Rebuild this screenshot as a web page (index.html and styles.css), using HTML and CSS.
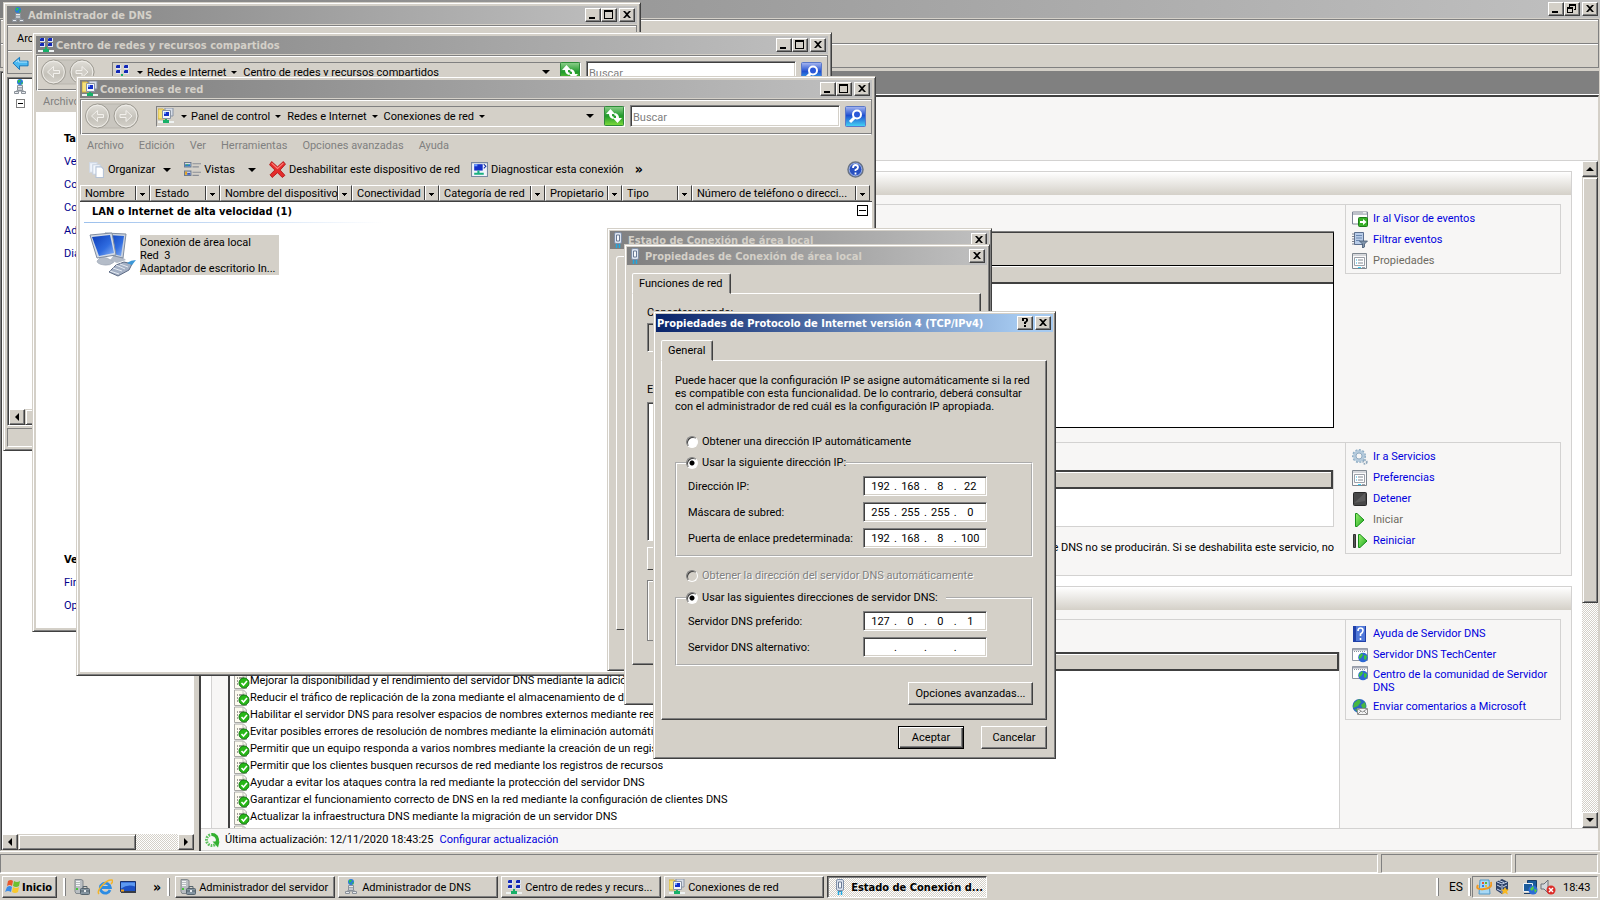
FILE: index.html
```html
<!DOCTYPE html>
<html lang="es">
<head>
<meta charset="utf-8">
<title>Administrador del servidor</title>
<link rel="stylesheet" href="styles.css">
</head>
<body>
<svg class="defs" aria-hidden="true">
  <defs>
    <linearGradient id="gBlue" x1="0" y1="0" x2="0" y2="1"><stop offset="0" stop-color="#a9b8f0"/><stop offset=".45" stop-color="#1f4fd0"/><stop offset="1" stop-color="#45d6f5"/></linearGradient>
    <linearGradient id="gGreen" x1="0" y1="0" x2="0" y2="1"><stop offset="0" stop-color="#8fd08c"/><stop offset=".5" stop-color="#1f9a2a"/><stop offset="1" stop-color="#7fdc3c"/></linearGradient>
    <linearGradient id="gScreen" x1="0" y1="0" x2="1" y2="1"><stop offset="0" stop-color="#0c3cb8"/><stop offset=".6" stop-color="#2f6ce0"/><stop offset="1" stop-color="#8cb4f4"/></linearGradient>
    <linearGradient id="gGrey" x1="0" y1="0" x2="0" y2="1"><stop offset="0" stop-color="#e2e0da"/><stop offset=".6" stop-color="#c4c1b9"/><stop offset="1" stop-color="#d6d3cc"/></linearGradient>
    <linearGradient id="gPlay" x1="0" y1="0" x2="1" y2="1"><stop offset="0" stop-color="#9af070"/><stop offset="1" stop-color="#1ea81e"/></linearGradient>
  </defs>
  <symbol id="i-dns" viewBox="0 0 16 16"><circle cx="8" cy="3" r="3" fill="#2a7bd8"/><path d="M6 1l3 0-1 2-2 1zM9 4l2-1-1 3z" fill="#2fc04a"/><path d="M8 7v5M4 12h8" stroke="#8a9098"/><path d="M5.500 6.500h5v5h-5zM2.500 12.500h4v2h-4zM9.500 12.500h4v2h-4z" fill="#e8ebef" stroke="#8a9199"/><path d="M6 8.500h4M6 10h4" stroke="#8d959e" stroke-width=".8"/></symbol>
  <symbol id="i-center" viewBox="0 0 16 16"><path d="M2 1h5v4H2zM10 1h5v4h-5zM2 6h5v4H2zM10 6h5v4h-5z" fill="#dfe6f4"/><path d="M2 1h4v3H2zM10 1h4v3h-4zM2 6h4v3H2zM10 6h4v3h-4z" fill="#1428b4"/><path d="M2 1h1v1H2zM10 1h1v1h-1zM2 6h1v1H2zM10 6h1v1h-1z" fill="#5878f0"/><path d="M0 14h16" stroke="#eef2f2" stroke-width="2"/><path d="M7 10h2v2h2v3H5v-3h2z" fill="#18b068"/></symbol>
  <symbol id="i-conn" viewBox="0 0 16 16"><path d="M0 1h5l1 1h3v9H0z" fill="#f6e27a" stroke="#d0b040"/><path d="M7 0h8v8H7z" fill="#d8dee8" stroke="#8a94a4"/><path d="M4.500 2.500h8v8h-8z" fill="#f4f6fa" stroke="#8a94a4"/><path d="M6 4h5v4H6z" fill="#1430c8"/><path d="M6 4h2v2H6z" fill="#6c9cff"/><path d="M0 14h16" stroke="#eef2f2" stroke-width="2"/><path d="M7 11h2v1h2v3H5v-3h2z" fill="#18b068"/></symbol>
  <symbol id="i-plug" viewBox="0 0 16 16"><rect x="4.500" y=".5" width="7" height="11" rx="1.500" fill="#dce4f0" stroke="#8090a8"/><path d="M6.500 3v6h3V3z" fill="#f6f9fc" stroke="#6a7a94"/><path d="M6 12h4v1H6z" fill="#6c7c94"/><path d="M6.500 12v4M9.500 12v4" stroke="#20a8e0" stroke-width="1.500"/></symbol>
  <symbol id="i-server" viewBox="0 0 16 16"><path d="M1 .5h6l2 1v10l-3 3H2l-1-2z" fill="#b9bec2" stroke="#83898d"/><path d="M2 2.500h4M2 4.500h4M2 6.500h4" stroke="#f4f6f6"/><path d="M2 9h2v2H2z" fill="#46c83c"/><rect x="6.500" y="9.500" width="9" height="6" rx="1" fill="#8494a0" stroke="#56646e"/><path d="M9 9V7.500h4V9M7 12h8" fill="none" stroke="#56646e"/><path d="M10 11h2v2h-2z" fill="#e8ecef"/></symbol>
  <symbol id="i-nav" viewBox="0 0 54 26"><rect x="1" y="1" width="52" height="24" rx="12" fill="#c9c6bf" stroke="#b8b5ad"/><g stroke="#a09d95"><circle cx="12.500" cy="13" r="12" fill="url(#gGrey)"/><circle cx="41" cy="13" r="12" fill="url(#gGrey)"/></g><g fill="none" stroke="#efede8"><circle cx="12.500" cy="13" r="10.800"/><circle cx="41" cy="13" r="10.800"/></g><g fill="#d0cdc6" stroke="#f2f0ec"><path d="M18.500 11.500h-6v-4L6.500 13l6 5.500v-4h6z"/><path d="M35 11.500h6v-4l6 5.500-6 5.500v-4h-6z"/></g></symbol>
  <symbol id="i-refresh" viewBox="0 0 20 20"><rect x=".5" y=".5" width="19" height="19" rx="1" fill="url(#gGreen)" stroke="#2e8a38"/><path d="M2 8l4.500-5L11 8H8v2l2 1-1 2q-4-1-4-5zM18 12l-4.500 5L9 12h3v-2l-2-1 1-2q4 1 4 5z" fill="#fff"/></symbol>
  <symbol id="i-search" viewBox="0 0 21 21"><rect x=".5" y=".5" width="20" height="20" rx="1" fill="url(#gBlue)" stroke="#5a78c8"/><path d="M9.500 11.500L5 16" stroke="#fff" stroke-width="3"/><circle cx="12" cy="8.500" r="4" fill="#2a58d8" stroke="#fff" stroke-width="2"/></symbol>
  <symbol id="i-help" viewBox="0 0 17 17"><circle cx="8.500" cy="8.500" r="7.500" fill="#2850c0" stroke="#6a7484" stroke-width="1.500"/><circle cx="8.500" cy="8.500" r="6.300" fill="none" stroke="#b8c8f0" stroke-width=".8"/><path d="M6 7q0-3 2.500-3T11 6.500Q11 8 8.500 9v1M8.500 11.500v2" fill="none" stroke="#fff" stroke-width="1.800"/></symbol>
  <symbol id="i-org" viewBox="0 0 16 16"><path d="M1.500 1.500h7v9h-7z" fill="#eef3fb" stroke="#d0d8e4"/><path d="M4.500 3.500h7v9h-7z" fill="#f4f8fd" stroke="#c6d0de"/><path d="M7.500 5.500h5l2 2v8h-7z" fill="#fff" stroke="#b4c2d6"/></symbol>
  <symbol id="i-views" viewBox="0 0 16 16"><path d="M.5 1.500h6v4h-6zM.5 9.500h6v4h-6z" fill="#fff" stroke="#6a7a90"/><path d="M1 3h5v2H1z" fill="#2a78c8"/><path d="M2 3h2v1H2z" fill="#50b850"/><path d="M1 10h2v3H1z" fill="#e0a020"/><path d="M3 11h3v2H3z" fill="#3858c0"/><path d="M8 2.500h8M8 5.500h6M8 10.500h8M8 13.500h6" stroke="#8a8e96"/></symbol>
  <symbol id="i-x" viewBox="0 0 16 16"><path d="M2.500.5L8 5.500l5.500-5 2 2.500-5 5.500 4.500 5-2.500 2L8 11l-5 4.500-2-2.500 4.500-4.500L.5 3.500z" fill="#e42c2c" stroke="#b01818" stroke-width=".8"/><path d="M2.500 2L8 7l5.500-5" fill="none" stroke="#ff8078"/></symbol>
  <symbol id="i-diag" viewBox="0 0 16 14"><path d="M.5.5h15v13H.5z" fill="#f0f4fa" stroke="#7888a0"/><path d="M3 2h8v6H3z" fill="#1430c8"/><path d="M3 2h3v2H3z" fill="#6c9cff"/><path d="M6 8h2v3H6zM3 10h9v2H3z" fill="#18b080"/><path d="M12 2l2 2-2 2" stroke="#1430a0" fill="none"/></symbol>
  <symbol id="i-pc" viewBox="0 0 48 46"><path d="M25 24l7 1 5 4-9 3-7-3z" fill="#b4bcc8"/><path d="M16 2l21 1-3 24-17-4z" fill="#c9d2de" stroke="#7f8ca0"/><path d="M18 4l17 1-3 20-14-4z" fill="url(#gScreen)"/><path d="M12 26l6 1 7 4q-4 4-10 3-7-1-7-4z" fill="#b4bcc8" stroke="#98a2b2" stroke-width=".6"/><path d="M1 4l22-2 4 22-19 3z" fill="#d4dbe5" stroke="#7f8ca0"/><path d="M3 6l18-2 4 18-15 3z" fill="url(#gScreen)"/><path d="M27 34l8-3 8 2-3 6-11 6-9-4z" fill="#a4b0c4" stroke="#5c6a84"/><path d="M24 37l9 3M27 34l9 4M31 33l8 3M21 40l9 3" stroke="#e4eaf2"/><path d="M38 32q4-3 9-3l-4 5z" fill="#3c98d8"/></symbol>
  <symbol id="i-left" viewBox="0 0 18 14"><path d="M1 7l7-6v4h9v5H8v4z" fill="#4ab8f0" stroke="#1474b8"/><path d="M4 6l3-2v2h9" fill="none" stroke="#b8e4fc"/></symbol>
  <symbol id="i-doc" viewBox="0 0 16 17"><path d="M.5 1h9l3 3v12.500H.5z" fill="#fdfbf0" stroke="#a8a8a4"/><path d="M9 1v4h4" fill="none" stroke="#c0c0bc"/><path d="M3 6h1M3 9h1M3 12h1M5 6h5" stroke="#404040"/><circle cx="10" cy="11" r="5" fill="#28b818" stroke="#117a10"/><path d="M7.500 11l2 2 3.500-4" fill="none" stroke="#fff" stroke-width="1.600"/></symbol>
  <symbol id="i-viewer" viewBox="0 0 16 16"><path d="M.5 1h15v12H.5z" fill="#fff" stroke="#7c8494"/><path d="M1 3h14" stroke="#7c8494"/><path d="M11 1.800h3" stroke="#fff"/><rect x="6.500" y="6.500" width="9" height="9" rx="1" fill="#38b028" stroke="#1c7c18"/><path d="M8 10h3V8l3.500 3L11 14v-2H8z" fill="#fff"/></symbol>
  <symbol id="i-filter" viewBox="0 0 16 16"><path d="M2.500.5h9v12h-9z" fill="#b8cce8" stroke="#5c7090"/><path d="M4 3.500h6M4 6h6M4 8.500h4" stroke="#6c88b0"/><path d="M0 2h3M0 4.500h3M0 7h3M0 9.500h3M0 12h3" stroke="#606878" stroke-width=".8"/><path d="M7.500 9h8l-3 3v3l-2 1v-4z" fill="#8094ac" stroke="#445870" stroke-width=".8"/></symbol>
  <symbol id="i-props" viewBox="0 0 16 16"><path d="M.5.500h14v15H.5z" fill="#fafafa" stroke="#808890"/><path d="M1 2h13" stroke="#b0b4bc"/><path d="M2.500 4.500h10v8h-10z" fill="#fff" stroke="#9ca0a8"/><path d="M6 7h5M6 10h5" stroke="#808890"/><path d="M4 7h1M4 10h1" stroke="#20b0e0"/><path d="M6 14.500h3" stroke="#38d0f8"/><path d="M10 14.500h3" stroke="#a0a4ac"/></symbol>
  <symbol id="i-gear" viewBox="0 0 16 16"><circle cx="7" cy="7" r="4.500" fill="none" stroke="#b4cadc" stroke-width="3"/><circle cx="7" cy="7" r="6.300" fill="none" stroke="#8cacc4" stroke-width="1.400" stroke-dasharray="2 1.600"/><circle cx="7" cy="7" r="3" fill="#f7f6f5" stroke="#7c9cb8" stroke-width=".8"/><circle cx="13" cy="13" r="1.800" fill="none" stroke="#90a8bc" stroke-width="1.800" stroke-dasharray="1.500 .8"/></symbol>
  <symbol id="i-stop" viewBox="0 0 16 16"><rect x="1.500" y="1.500" width="13" height="13" rx="1" fill="#484848" stroke="#282828"/><path d="M2 12L13 2v8z" fill="#5c5c5c"/></symbol>
  <symbol id="i-play" viewBox="0 0 16 16"><path d="M3.500 1.500h1.500L12 8l-7 6.500H3.500z" fill="url(#gPlay)" stroke="#189018"/></symbol>
  <symbol id="i-restart" viewBox="0 0 16 16"><path d="M1.500 1.500h2v13h-2z" fill="#585858" stroke="#303030"/><path d="M6.500 1.500H8L15 8l-7 6.500H6.500z" fill="url(#gPlay)" stroke="#189018"/></symbol>
  <symbol id="i-book" viewBox="0 0 16 16"><path d="M1 0h13v16H1z" fill="#2040a8"/><path d="M4 0h9v15H4z" fill="#5078d8"/><path d="M6 5q0-3 2.500-3T11 4.500Q11 6.500 8.500 8v2M8.500 12v2" fill="none" stroke="#fff" stroke-width="1.600"/></symbol>
  <symbol id="i-web" viewBox="0 0 16 16"><path d="M.5 1.500h15v12H.5z" fill="#fff" stroke="#8c94a0"/><path d="M1 2.500h14" stroke="#a4a8b4" stroke-width="2"/><path d="M2 4.500h12" stroke="#8c94a0" stroke-dasharray="1 1"/><circle cx="11" cy="10.500" r="4.800" fill="#2c68d4"/><path d="M7 9l3-3 1 2-2 3-2 1zM12 8l3 1-1 4-2-1z" fill="#3cc43c"/></symbol>
  <symbol id="i-mail" viewBox="0 0 16 16"><circle cx="7.500" cy="7" r="7" fill="#2c68c0"/><path d="M2 4l5-4 2 3-3 4-5 2zM9 6l4-3 1 5-3 2zM3 10l3 0 0 4z" fill="#48b840"/><path d="M5.500 9.500h10v6h-10z" fill="#f4f4f4" stroke="#909090"/><path d="M6 10l4.500 3 4.500-3M6 15l3-3M15 15l-3-3" fill="none" stroke="#909090"/></symbol>
  <symbol id="i-cycle" viewBox="0 0 16 16"><circle cx="8" cy="8" r="5.500" fill="none" stroke="#5cc05c" stroke-width="3" stroke-dasharray="1.700 1"/><path d="M8 2.500a5.500 5.500 0 0 1 4.500 8.500" fill="none" stroke="#34b030" stroke-width="3"/><path d="M8.500 9.500h7l-1.500 6z" fill="#34b030"/></symbol>
  <symbol id="i-flag" viewBox="0 0 16 16"><path d="M3 2q3-2 5 0L7 7Q5 5 2 7z" fill="#e8582c"/><path d="M9 2q3 2 6 0l-1 5q-3 2-6 0z" fill="#6cc030"/><path d="M2 8q3-2 5 0l-1 5q-3-2-6 0z" fill="#3c8ce8"/><path d="M8 8q3 2 6 0l-1 5q-3 2-6 0z" fill="#f8c82c"/></symbol>
  <symbol id="i-ie" viewBox="0 0 16 16"><path d="M13 11A5 5 0 1 1 13.300 8.500H4" fill="none" stroke="#2c8ce4" stroke-width="2.800"/><path d="M2 15C-1 12 9 0 15 1c1 1 0 3-1 4" fill="none" stroke="#f4b428" stroke-width="1.500"/></symbol>
  <symbol id="i-desk" viewBox="0 0 16 13"><path d="M.5 1h15v10H.5z" fill="#1c50c4" stroke="#18306c"/><path d="M1 2l14 0v4Q8 3 1 8z" fill="#5c98f0"/><path d="M1 11.500h15" stroke="#383c44" stroke-width="2"/><path d="M1 9h3v2H1z" fill="#f0a020"/></symbol>
  <symbol id="i-upd" viewBox="0 0 16 16"><path d="M4 1h9l1 14H3z" fill="#a8d8f4" stroke="#5098c8"/><path d="M6 3h2v2H6z" fill="#e85830"/><path d="M9 3h2v2H9z" fill="#58b838"/><path d="M6 6h2v2H6z" fill="#3878e0"/><path d="M9 6h2v2H9z" fill="#f0c030"/><path d="M2 6q-3 5 6 4t7-7" fill="none" stroke="#f09820" stroke-width="2"/></symbol>
  <symbol id="i-vbox" viewBox="0 0 16 16"><path d="M8 0l6 3v8l-6 4-6-4V3z" fill="#2c4068"/><path d="M3 3l5 2 5-2M8 6v8M3 6l4 2M13 6L9 8M3 10l4 2M5 1.500l5 2" stroke="#c8d4ec" fill="none"/><path d="M11 8l1.500 2.500 2.500 0-2 2 1 3-3-1.500-3 1.500 1-3-2-2h2.500z" fill="#f8b820"/></symbol>
  <symbol id="i-lan" viewBox="0 0 16 16"><path d="M5.500 1.500h9v8h-9z" fill="#1c5c9c" stroke="#183c68"/><path d="M1.500 4.500h9v8h-9z" fill="#1c5c9c" stroke="#f0f4f8"/><path d="M2 14.500h8" stroke="#183c68"/><circle cx="11" cy="11" r="4.500" fill="#2c6cd8"/><path d="M8 10l3-3 1 2-2 3zM12 10l3 1-2 3z" fill="#50d040"/></symbol>
  <symbol id="i-vol" viewBox="0 0 16 16"><path d="M1 5h3l4-4v13l-4-4H1z" fill="#d4d8dc" stroke="#6c7078"/><circle cx="11" cy="11" r="4.500" fill="#dc2c28"/><path d="M9 9l4 4M13 9l-4 4" stroke="#fff" stroke-width="1.500"/></symbol>
  <symbol id="b-min" viewBox="0 0 12 10"><path d="M2 7h6v2H2z"/></symbol>
  <symbol id="b-max" viewBox="0 0 12 10"><path d="M1 0h9v9H1zM2 2v6h7V2z" fill-rule="evenodd"/></symbol>
  <symbol id="b-res" viewBox="0 0 12 10"><path d="M3 0h7v6H8V5h1V2H4v1H3zM1 3h6v6H1zM2 5v3h4V5z" fill-rule="evenodd"/></symbol>
  <symbol id="b-close" viewBox="0 0 12 10"><path d="M2 1h2l2 2 2-2h2L7 4.500 10 8H8L6 6 4 8H2l3-3.500z"/></symbol>
  <symbol id="b-help" viewBox="0 0 12 10"><path d="M3 0h5l1 1v2L7 5v1H5V4l2-1V1H5v2H3zM5 7h2v2H5z"/></symbol>
</svg>

<main class="server">
  <header class="title">
    <span class="grow"></span>
    <button class="cap" aria-label="Minimizar"><svg><use href="#b-min"/></svg></button>
    <button class="cap" aria-label="Restaurar"><svg><use href="#b-res"/></svg></button>
    <button class="cap close" aria-label="Cerrar"><svg><use href="#b-close"/></svg></button>
  </header>
  <div class="bands"><div class="band"></div><div class="band"></div></div>
  <div class="console">
    <aside class="tree">
      <div class="grow"></div>
      <div class="hscroll"><button class="sb" aria-label="Izquierda"><i class="tri l"></i></button><span class="thumb tree-thumb"></span><span class="grow"></span><button class="sb" aria-label="Derecha"><i class="tri r"></i></button></div>
    </aside>
    <div class="pane">
      <div class="pane-head"></div>
      <div class="pane-body">
        <div class="summary"></div>
        <div class="scroller">
          <div class="sections">
            <section class="section">
              <div class="section-head"></div>
              <div class="row">
                <div class="col">
                  <div class="events"><div class="strip"></div><div class="grid-head"></div><div class="grid-body"></div></div>
                </div>
                <nav class="links">
                  <a href="#"><svg><use href="#i-viewer"/></svg>Ir al Visor de eventos</a>
                  <a href="#"><svg><use href="#i-filter"/></svg>Filtrar eventos</a>
                  <a class="off"><svg><use href="#i-props"/></svg>Propiedades</a>
                </nav>
              </div>
              <div class="row second">
                <div class="col">
                  <div class="services"><div class="grid-head framed"></div></div>
                  <p class="desc">de DNS no se producirán. Si se deshabilita este servicio, no</p>
                </div>
                <nav class="links">
                  <a href="#"><svg><use href="#i-gear"/></svg>Ir a Servicios</a>
                  <a href="#"><svg><use href="#i-props"/></svg>Preferencias</a>
                  <a href="#"><svg><use href="#i-stop"/></svg>Detener</a>
                  <a class="off"><svg><use href="#i-play"/></svg>Iniciar</a>
                  <a href="#"><svg><use href="#i-restart"/></svg>Reiniciar</a>
                </nav>
              </div>
            </section>
            <section class="section">
              <div class="section-head"></div>
              <div class="row third">
                <div class="col">
                  <div class="advice"><div class="grid-head framed"></div>
                    <ul>
                      <li><svg><use href="#i-doc"/></svg>Mejorar la disponibilidad y el rendimiento del servidor DNS mediante la adición</li>
                      <li><svg><use href="#i-doc"/></svg>Reducir el tráfico de replicación de la zona mediante el almacenamiento de dat</li>
                      <li><svg><use href="#i-doc"/></svg>Habilitar el servidor DNS para resolver espacios de nombres externos mediante reen</li>
                      <li><svg><use href="#i-doc"/></svg>Evitar posibles errores de resolución de nombres mediante la eliminación automática</li>
                      <li><svg><use href="#i-doc"/></svg>Permitir que un equipo responda a varios nombres mediante la creación de un regist</li>
                      <li><svg><use href="#i-doc"/></svg>Permitir que los clientes busquen recursos de red mediante los registros de recursos</li>
                      <li><svg><use href="#i-doc"/></svg>Ayudar a evitar los ataques contra la red mediante la protección del servidor DNS</li>
                      <li><svg><use href="#i-doc"/></svg>Garantizar el funcionamiento correcto de DNS en la red mediante la configuración de clientes DNS</li>
                      <li><svg><use href="#i-doc"/></svg>Actualizar la infraestructura DNS mediante la migración de un servidor DNS</li>
                      <li><svg><use href="#i-doc"/></svg></li>
                    </ul>
                  </div>
                </div>
                <nav class="links">
                  <a href="#"><svg><use href="#i-book"/></svg>Ayuda de Servidor DNS</a>
                  <a href="#"><svg><use href="#i-web"/></svg>Servidor DNS TechCenter</a>
                  <a href="#" class="two"><svg><use href="#i-web"/></svg>Centro de la comunidad de Servidor DNS</a>
                  <a href="#"><svg><use href="#i-mail"/></svg>Enviar comentarios a Microsoft</a>
                </nav>
              </div>
            </section>
          </div>
          <div class="vscroll"><button class="sb" aria-label="Arriba"><i class="tri u"></i></button><span class="thumb main-thumb"></span><span class="track"></span><button class="sb" aria-label="Abajo"><i class="tri d"></i></button></div>
        </div>
        <footer class="updated"><svg><use href="#i-cycle"/></svg><span>Última actualización: 12/11/2020 18:43:25</span><a href="#">Configurar actualización</a></footer>
      </div>
    </div>
  </div>
  <div class="status"><span class="grow"></span><span class="cell-a"></span><span class="cell-b"></span></div>
</main>

<section class="win dns">
  <header class="title">
    <svg class="ico"><use href="#i-dns"/></svg><h2>Administrador de DNS</h2>
    <button class="cap" aria-label="Minimizar"><svg><use href="#b-min"/></svg></button>
    <button class="cap" aria-label="Maximizar"><svg><use href="#b-max"/></svg></button>
    <button class="cap close" aria-label="Cerrar"><svg><use href="#b-close"/></svg></button>
  </header>
  <div class="dns-menu">Arc</div>
  <div class="dns-tools"><svg><use href="#i-left"/></svg></div>
  <div class="dns-tree">
    <svg class="ico"><use href="#i-dns"/></svg><span class="minus small"></span>
    <span class="grow"></span>
    <div class="hscroll"><button class="sb" aria-label="Izquierda"><i class="tri l"></i></button><span class="thumb tree-thumb"></span><span class="grow"></span></div>
  </div>
  <div class="dns-status"></div>
</section>

<section class="win share">
  <header class="title">
    <svg class="ico"><use href="#i-center"/></svg><h2>Centro de redes y recursos compartidos</h2>
    <button class="cap" aria-label="Minimizar"><svg><use href="#b-min"/></svg></button>
    <button class="cap" aria-label="Maximizar"><svg><use href="#b-max"/></svg></button>
    <button class="cap close" aria-label="Cerrar"><svg><use href="#b-close"/></svg></button>
  </header>
  <div class="rebar">
    <svg class="nav"><use href="#i-nav"/></svg>
    <div class="address"><svg class="ico"><use href="#i-center"/></svg><i class="dd"></i><span>Redes e Internet</span><i class="dd"></i><span>Centro de redes y recursos compartidos</span><span class="grow"></span><i class="dd big"></i><svg class="refresh"><use href="#i-refresh"/></svg></div>
    <input class="search" type="text" placeholder="Buscar" aria-label="Buscar">
    <button class="go" aria-label="Buscar"><svg><use href="#i-search"/></svg></button>
  </div>
  <nav class="menu"><span>Archivo</span></nav>
  <div class="tasks">
    <h3>Ta</h3><a href="#">Ve</a><a href="#">Co</a><a href="#">Co</a><a href="#">Ad</a><a href="#">Dia</a>
    <span class="grow"></span>
    <h3>Ve</h3><a href="#">Fir</a><a href="#">Op</a>
  </div>
</section>

<section class="win conn">
  <header class="title">
    <svg class="ico"><use href="#i-conn"/></svg><h2>Conexiones de red</h2>
    <button class="cap" aria-label="Minimizar"><svg><use href="#b-min"/></svg></button>
    <button class="cap" aria-label="Maximizar"><svg><use href="#b-max"/></svg></button>
    <button class="cap close" aria-label="Cerrar"><svg><use href="#b-close"/></svg></button>
  </header>
  <div class="rebar">
    <svg class="nav"><use href="#i-nav"/></svg>
    <div class="address"><svg class="ico"><use href="#i-conn"/></svg><i class="dd"></i><span>Panel de control</span><i class="dd"></i><span>Redes e Internet</span><i class="dd"></i><span>Conexiones de red</span><i class="dd"></i><span class="grow"></span><i class="dd big"></i><svg class="refresh"><use href="#i-refresh"/></svg></div>
    <input class="search" type="text" placeholder="Buscar" aria-label="Buscar en conexiones">
    <button class="go" aria-label="Buscar"><svg><use href="#i-search"/></svg></button>
  </div>
  <nav class="menu"><span>Archivo</span><span>Edición</span><span>Ver</span><span>Herramientas</span><span>Opciones avanzadas</span><span>Ayuda</span></nav>
  <div class="tools">
    <button><svg><use href="#i-org"/></svg>Organizar<i class="dd big"></i></button>
    <button class="views"><svg><use href="#i-views"/></svg>Vistas<i class="dd big"></i></button>
    <button><svg><use href="#i-x"/></svg>Deshabilitar este dispositivo de red</button>
    <button><svg><use href="#i-diag"/></svg>Diagnosticar esta conexión</button>
    <button class="chev" aria-label="Más">»</button>
    <span class="grow"></span>
    <button aria-label="Ayuda"><svg><use href="#i-help"/></svg></button>
  </div>
  <div class="cols">
    <button class="c70">Nombre</button><button class="c70">Estado</button><button class="c132">Nombre del dispositivo</button><button class="c87">Conectividad</button><button class="c106">Categoría de red</button><button class="c77">Propietario</button><button class="c70">Tipo</button><button class="c178">Número de teléfono o direcci...</button>
  </div>
  <div class="files">
    <div class="group"><h3>LAN o Internet de alta velocidad (1)</h3><span class="minus"></span></div>
    <hr>
    <div class="item"><svg><use href="#i-pc"/></svg><p>Conexión de área local<br>Red&nbsp; 3<br>Adaptador de escritorio In...</p></div>
  </div>
</section>

<section class="win dlg state">
  <header class="title">
    <svg class="ico"><use href="#i-plug"/></svg><h2>Estado de Conexión de área local</h2>
    <button class="cap close" aria-label="Cerrar"><svg><use href="#b-close"/></svg></button>
  </header>
  <div class="state-page"></div>
</section>

<section class="win dlg props">
  <header class="title">
    <svg class="ico"><use href="#i-plug"/></svg><h2>Propiedades de Conexión de área local</h2>
    <button class="cap close" aria-label="Cerrar"><svg><use href="#b-close"/></svg></button>
  </header>
  <div class="tabs"><button class="tab">Funciones de red</button></div>
  <div class="page">
    <p>Conectar usando:</p>
    <div class="field adapter"></div>
    <p>E</p>
    <div class="field elements"></div>
    <div class="install"></div>
    <div class="frame"></div>
  </div>
</section>

<section class="win dlg ipv4">
  <header class="title active">
    <h2>Propiedades de Protocolo de Internet versión 4 (TCP/IPv4)</h2>
    <button class="cap" aria-label="Ayuda"><svg><use href="#b-help"/></svg></button>
    <button class="cap close" aria-label="Cerrar"><svg><use href="#b-close"/></svg></button>
  </header>
  <div class="tabs"><button class="tab">General</button></div>
  <form class="page">
    <p class="intro">Puede hacer que la configuración IP se asigne automáticamente si la red<br>es compatible con esta funcionalidad. De lo contrario, deberá consultar<br>con el administrador de red cuál es la configuración IP apropiada.</p>
    <label class="opt first"><input type="radio" name="ip">Obtener una dirección IP automáticamente</label>
    <fieldset>
      <legend><label class="opt"><input type="radio" name="ip" checked>Usar la siguiente dirección IP:</label></legend>
      <div class="line"><label for="ip1">Dirección IP:</label><div class="ip"><input id="ip1" value="192">.<input aria-label="IP 2" value="168">.<input aria-label="IP 3" value="8">.<input aria-label="IP 4" value="22"></div></div>
      <div class="line"><label for="mk1">Máscara de subred:</label><div class="ip"><input id="mk1" value="255">.<input aria-label="Máscara 2" value="255">.<input aria-label="Máscara 3" value="255">.<input aria-label="Máscara 4" value="0"></div></div>
      <div class="line"><label for="gw1">Puerta de enlace predeterminada:</label><div class="ip"><input id="gw1" value="192">.<input aria-label="Puerta 2" value="168">.<input aria-label="Puerta 3" value="8">.<input aria-label="Puerta 4" value="100"></div></div>
    </fieldset>
    <label class="opt dnsauto"><input type="radio" name="dns" disabled>Obtener la dirección del servidor DNS automáticamente</label>
    <fieldset>
      <legend class="wide"><label class="opt"><input type="radio" name="dns" checked>Usar las siguientes direcciones de servidor DNS:</label></legend>
      <div class="line"><label for="d1">Servidor DNS preferido:</label><div class="ip"><input id="d1" value="127">.<input aria-label="DNS 2" value="0">.<input aria-label="DNS 3" value="0">.<input aria-label="DNS 4" value="1"></div></div>
      <div class="line"><label for="e1">Servidor DNS alternativo:</label><div class="ip"><input id="e1" value="">.<input aria-label="Alternativo 2" value="">.<input aria-label="Alternativo 3" value="">.<input aria-label="Alternativo 4" value=""></div></div>
    </fieldset>
    <button type="button" class="btn adv">Opciones avanzadas...</button>
  </form>
  <div class="actions"><button class="btn default">Aceptar</button><button class="btn">Cancelar</button></div>
</section>

<footer class="taskbar">
  <button class="start"><svg><use href="#i-flag"/></svg>Inicio</button>
  <i class="sep"></i>
  <div class="quick"><svg><use href="#i-server"/></svg><svg><use href="#i-ie"/></svg><svg><use href="#i-desk"/></svg></div>
  <button class="chev" aria-label="Más">»</button>
  <i class="sep"></i>
  <div class="apps">
    <button><svg><use href="#i-server"/></svg>Administrador del servidor</button>
    <button><svg><use href="#i-dns"/></svg>Administrador de DNS</button>
    <button><svg><use href="#i-center"/></svg>Centro de redes y recurs...</button>
    <button><svg><use href="#i-conn"/></svg>Conexiones de red</button>
    <button class="on"><svg><use href="#i-plug"/></svg>Estado de Conexión d...</button>
  </div>
  <i class="sep"></i><span class="lang">ES</span><i class="sep"></i>
  <div class="tray"><svg><use href="#i-upd"/></svg><svg><use href="#i-vbox"/></svg><svg class="lan"><use href="#i-lan"/></svg><svg><use href="#i-vol"/></svg><time>18:43</time></div>
</footer>
</body>
</html>
```
FILE: styles.css
```css
:root {
  --face: #d4d0c8;
  --shade: #808080;
  --dark: #404040;
  --soft: #f7f6f5;
  --line: #d3d2d1;
  --ui: Roboto, "Liberation Sans", sans-serif;
  --bold: "DejaVu Sans Condensed", "DejaVu Sans", sans-serif;
}
* { box-sizing: border-box; }
body {
  margin: 0;
  height: 100vh;
  display: flex;
  flex-direction: column;
  overflow: hidden;
  background: var(--face);
  color: #000;
  font: 11px/13px var(--ui);
}
h2, h3, p, ul, fieldset, legend { margin: 0; padding: 0; }
h2, h3 { font: bold 11px/13px var(--bold); }
button, input { font: inherit; color: inherit; margin: 0; padding: 0; border: 0; border-radius: 0; background: none; outline: 0; }
svg { display: block; flex: none; width: 16px; height: 16px; }
a { color: #00d; text-decoration: none; }
.defs { position: absolute; width: 0; height: 0; }
.grow { flex: 1; }

/* Title bars */
.title {
  flex: none;
  display: flex;
  align-items: center;
  height: 18px;
  padding-right: 2px;
  background: linear-gradient(90deg, #808080, #c0c0c0);
  color: var(--face);
}
.title.active { background: linear-gradient(90deg, #0a246a, #a6caf0 92%); color: #fff; }
.title h2 { flex: 1; white-space: nowrap; padding-left: 2px; }
.title .ico { margin-left: 2px; }
.cap, .sb {
  flex: none;
  display: grid;
  place-items: center;
  width: 16px;
  height: 14px;
  background: var(--face);
  border: 1px solid;
  border-color: #fff var(--dark) var(--dark) #fff;
  box-shadow: inset -1px -1px 0 var(--shade);
}
.cap svg { width: 12px; height: 10px; fill: #000; }
.cap.close { margin-left: 2px; }
.sb { height: 16px; }

/* Scroll bars */
.hscroll, .vscroll, .track {
  background: repeating-conic-gradient(#fff 0 25%, var(--face) 0 50%) 0 0 / 2px 2px;
}
.hscroll { flex: none; display: flex; height: 16px; }
.vscroll { flex: none; display: flex; flex-direction: column; width: 16px; }
.thumb {
  background: var(--face);
  border: 1px solid;
  border-color: var(--face) var(--dark) var(--dark) var(--face);
  box-shadow: inset 1px 1px 0 #fff, inset -1px -1px 0 var(--shade);
}
.tree-thumb { width: 118px; }
.main-thumb { flex: 425; }
.track { flex: 210; }
.tri { border: 4px solid transparent; }
.tri.l { border-left: 0; border-right-color: #000; }
.tri.r { border-right: 0; border-left-color: #000; }
.tri.u { border-top: 0; border-bottom-color: #000; }
.tri.d { border-bottom: 0; border-top-color: #000; }

/* Server manager */
.server { flex: 1; min-height: 0; display: flex; flex-direction: column; }
.bands { flex: none; margin-top: 1px; padding-right: 1px; }
.band { height: 24px; border: 1px solid var(--shade); border-bottom: 0; box-shadow: inset 0 1px 0 #fff; }
.band:last-child { height: 25px; border-bottom: 1px solid var(--shade); }
.console { flex: 1; min-height: 0; display: flex; gap: 4px; padding: 3px 1px 0 0; border-bottom: 1px solid #fff; }
.tree {
  width: 195px;
  display: flex;
  flex-direction: column;
  background: #fff;
  border: solid;
  border-width: 1px 1px 1px 1px;
  border-color: var(--shade) var(--face) var(--face) var(--shade);
  box-shadow: inset 1px 1px 0 var(--dark);
  padding-left: 1px;
}
.pane { flex: 1; min-width: 0; display: flex; flex-direction: column; }
.pane-head { flex: none; height: 24px; background: var(--shade); border-bottom: 1px solid #fff; }
.pane-body {
  flex: 1;
  min-height: 0;
  display: flex;
  flex-direction: column;
  background: #fff;
  border-top: 2px solid var(--dark);
  border-left: 2px solid var(--dark);
  border-right: 1px solid var(--face);
}
.summary { flex: none; height: 64px; background: var(--soft); border-bottom: 1px solid var(--line); }
.scroller { flex: 1; min-height: 0; display: flex; }
.sections { flex: 1; min-width: 0; overflow: hidden; padding: 10px 10px 0; }
.section { margin-bottom: 10px; padding-bottom: 21px; background: var(--soft); border: 1px solid var(--line); }
.section-head { height: 23px; margin-bottom: 9px; background: linear-gradient(#fff, var(--face)); }
.row { display: flex; align-items: flex-start; margin-right: 10px; padding-bottom: 14px; }
.second, .third { padding-bottom: 0; }
.col { flex: 1; min-width: 0; padding: 27px 11px 0 16px; border-top: 1px solid var(--line); }
.third .col { padding-top: 32px; padding-right: 5px; }
.links { flex: none; width: 216px; padding: 3px 6px 2px; border: 1px solid var(--line); }
.links a { display: flex; align-items: center; gap: 5px; height: 21px; }
.links a.two { height: 31px; }
.links a.two svg { align-self: flex-start; }
.links a.off { color: #6d6a60; }
.events { border: 1px solid; border-color: var(--dark) #000 #000 var(--dark); box-shadow: 0 -1px 0 var(--shade); background: #fff; }
.strip { height: 33px; background: var(--face); border-bottom: 1px solid #000; }
.grid-head { height: 18px; background: var(--face); border-top: 1px solid #fff; border-bottom: 2px solid var(--dark); }
.grid-head.framed { height: 19px; border: 2px solid var(--dark); border-left: 0; box-shadow: inset 0 1px 0 #fff; }
.grid-body { height: 143px; }
.services { height: 57px; background: #fff; border: 1px solid var(--line); border-top: 0; }
.desc { padding-top: 14px; text-align: right; white-space: nowrap; overflow: hidden; }
.advice { background: #fff; border-left: 2px solid var(--dark); border-right: 1px solid var(--line); min-height: 190px; }
.advice ul { list-style: none; padding: 1px 0 0 4px; }
.advice li { display: flex; align-items: center; height: 17px; white-space: nowrap; }
.advice li svg { height: 17px; }
.updated { flex: none; display: flex; align-items: center; height: 23px; padding-left: 3px; background: var(--soft); border-top: 1px solid var(--line); border-bottom: 1px solid var(--line); }
.updated span { margin: 0 6px 0 5px; }
.status { flex: none; display: flex; gap: 3px; height: 21px; padding: 2px 2px 0 0; }
.status span { border: 1px solid; border-color: var(--shade) #fff #fff var(--shade); }
.cell-a { width: 131px; }
.cell-b { width: 83px; }

/* Floating windows */
.win {
  position: absolute;
  display: flex;
  flex-direction: column;
  overflow: hidden;
  padding: 3px;
  background: var(--face);
  border: 1px solid;
  border-color: var(--face) var(--dark) var(--dark) var(--face);
  box-shadow: inset 1px 1px 0 #fff, inset -1px -1px 0 var(--shade);
}
.dlg { padding: 2px; }
.dns { left: 3px; top: 2px; width: 638px; height: 449px; }
.share { left: 32px; top: 32px; width: 800px; height: 600px; }
.conn { left: 76px; top: 76px; width: 800px; height: 600px; }
.state { left: 607px; top: 228px; width: 385px; height: 443px; }
.props { left: 624px; top: 244px; width: 366px; height: 461px; }
.ipv4 { left: 653px; top: 311px; width: 403px; height: 448px; }

.dns .title .ico { margin-left: 3px; }
.dns-menu { height: 25px; margin-top: 1px; padding: 6px 9px; border: 1px solid var(--shade); border-bottom: 0; box-shadow: inset 0 1px 0 #fff; }
.dns-tools { height: 24px; padding: 5px 4px; border: 1px solid var(--shade); box-shadow: inset 0 1px 0 #fff; }
.dns-tools svg { width: 17px; height: 14px; }
.dns-tree { flex: 1; margin-top: 3px; display: flex; flex-direction: column; background: #fff; border: 1px solid var(--shade); border-bottom-color: #fff; box-shadow: inset 1px 1px 0 var(--dark); padding: 1px 0 0 1px; }
.dns-tree .ico { margin-left: 3px; }
.minus { width: 11px; height: 11px; border: 1px solid #000; background: linear-gradient(#000, #000) center / 7px 1px no-repeat #fff; }
.minus.small { width: 9px; height: 9px; margin: 4px 0 0 7px; border-color: var(--shade); background-size: 5px 1px; }
.dns-status { height: 19px; margin-top: 2px; border: 1px solid; border-color: var(--shade) #fff #fff var(--shade); }

.rebar { flex: none; display: flex; align-items: center; gap: 5px; height: 36px; margin-top: 1px; padding: 0 5px 2px 4px; border: 1px solid var(--shade); border-bottom-color: #fff; box-shadow: inset 1px 1px 0 #fff, inset 0 -1px 0 var(--shade); }
.nav { width: 54px; height: 26px; margin-right: 12px; }
.address { flex: 1; display: flex; align-items: center; height: 21px; padding-left: 1px; border: 1px solid; border-color: var(--shade) #fff #fff var(--shade); }
.address span { white-space: nowrap; }
.dd { flex: none; margin: 0 6px 0 5px; border: 3px solid transparent; border-top-color: #000; border-bottom: 0; }
.address .ico + .dd { margin: 0 4px 0 7px; }
.dd.big { border-width: 4px; border-bottom: 0; margin: 0 10px; }
.refresh { width: 20px; height: 20px; }
.search { width: 210px; height: 22px; padding: 3px 2px 0; background: #fff; border: 1px solid; border-color: var(--shade) #fff #fff var(--shade); box-shadow: inset 1px 1px 0 var(--dark), inset -1px -1px 0 var(--face); }
.search::placeholder { color: #808080; opacity: 1; }
.go svg { width: 21px; height: 21px; }
.menu { flex: none; display: flex; align-items: center; gap: 15px; height: 21px; padding-left: 7px; color: var(--shade); }
.tasks { flex: 1; display: flex; flex-direction: column; padding: 15px 0 11px 28px; background: #fff; }
.tasks a, .tasks h3 { line-height: 23px; color: #00008b; }
.tasks h3 { color: #000; }

.tools { flex: none; display: flex; align-items: center; height: 29px; padding: 0 8px 2px; }
.tools button { display: flex; align-items: center; gap: 3px; white-space: nowrap; margin-right: 11px; }
.tools button:last-child { margin-right: 0; }
.tools .dd { margin: 0 2px 0 5px; }
.tools .views .dd { margin-left: 10px; }
.tools svg { width: 17px; height: 17px; }
.chev { font: bold 14px/13px var(--bold); }
.cols { flex: none; display: flex; height: 17px; border-bottom: 1px solid var(--dark); }
.cols button {
  padding: 1px 0 0 4px;
  text-align: left;
  white-space: nowrap;
  border: 1px solid;
  border-color: #fff var(--dark) var(--shade) #fff;
  background:
    linear-gradient(#fff, #fff) right 12px top 0 / 1px 100% no-repeat,
    linear-gradient(var(--dark), var(--dark)) right 13px top 0 / 1px 100% no-repeat,
    linear-gradient(#000, #000) right 4px top 7px / 5px 1px no-repeat,
    linear-gradient(#000, #000) right 5px top 8px / 3px 1px no-repeat,
    linear-gradient(#000, #000) right 6px top 9px / 1px 1px no-repeat;
}
.c70 { width: 70px; }
.c77 { width: 77px; }
.c87 { width: 87px; }
.c106 { width: 106px; }
.c132 { width: 132px; }
.c178 { width: 178px; }
.files { flex: 1; background: #fff; }
.group { display: flex; justify-content: space-between; padding: 3px 4px 0 12px; }
.group h3 { line-height: 14px; }
.files hr { width: 300px; height: 1px; margin: 3px 0 8px 4px; border: 0; background: linear-gradient(90deg, #9cc0ec, #fff); }
.item { display: flex; gap: 3px; padding-left: 9px; }
.item svg { width: 48px; height: 46px; }
.item p { align-self: flex-start; width: 139px; margin-top: 4px; padding-top: 1px; background: var(--face); white-space: nowrap; }

/* Property dialogs */
.state-page { flex: 1; margin: 7px 6px 38px; border: 1px solid #fff; border-radius: 3px 0 0 0; border-bottom-color: var(--dark); }
.tabs { flex: none; display: flex; margin: 8px 0 -1px 5px; }
.tab { height: 21px; padding: 0 7px 1px 6px; background: var(--face); border: 1px solid; border-color: #fff var(--dark) transparent #fff; border-radius: 2px 2px 0 0; box-shadow: inset -1px 0 0 var(--shade); z-index: 1; }
.page { margin: 0 6px 0 5px; border: 1px solid; border-color: #fff var(--dark) var(--dark) #fff; box-shadow: inset -1px -1px 0 var(--shade); }
.props .page { flex: 1; margin-bottom: 37px; padding: 12px 14px; }
.field { border: 1px solid; border-color: var(--shade) #fff #fff var(--shade); box-shadow: inset 1px 1px 0 var(--dark); }
.adapter { height: 29px; margin: 4px 0 31px; }
.elements { height: 139px; margin: 6px 0; background: #fff; }
.install { height: 23px; margin-bottom: 10px; border: 1px solid; border-color: #fff var(--dark) var(--dark) #fff; }
.frame { height: 61px; border: 1px solid var(--shade); box-shadow: inset 1px 1px 0 #fff; }
.props .title .ico, .state .title .ico { margin-left: 0; }
.ipv4 .title h2 { padding-left: 1px; }

.ipv4 .page { display: flex; flex-direction: column; padding: 13px 13px 14px; }
.intro { white-space: nowrap; }
.opt { display: flex; align-items: center; gap: 4px; height: 13px; white-space: nowrap; }
.opt input { appearance: none; width: 12px; height: 12px; border: 1px solid; border-color: var(--shade) #fff #fff var(--shade); border-radius: 50%; background: #fff; box-shadow: inset 1px 1px 0 var(--dark); }
.opt input:checked { background: radial-gradient(circle, #000 2px, #fff 3px); }
.opt input:disabled { background: var(--face); }
.opt.first { margin: 22px 0 8px 11px; }
.opt.dnsauto { margin: 12px 0 9px 11px; color: var(--shade); text-shadow: 1px 1px 0 #fff; }
fieldset { padding: 0 44px 7px 9px; border: 1px solid var(--shade); box-shadow: none; border: 2px groove #fff; }
legend.wide { padding-right: 8px; }
.line { display: flex; align-items: center; justify-content: space-between; height: 20px; margin-top: 6px; padding-left: 2px; }
legend + .line { margin-top: 7px; }
.ip { display: flex; align-items: center; width: 124px; height: 20px; padding-left: 3px; background: #fff; border: 1px solid; border-color: var(--shade) #fff #fff var(--shade); box-shadow: inset 1px 1px 0 var(--dark), inset -1px -1px 0 var(--face); }
.ip input { width: 27px; text-align: center; }
.btn { height: 23px; width: 66px; background: var(--face); border: 1px solid; border-color: #fff var(--dark) var(--dark) #fff; box-shadow: inset -1px -1px 0 var(--shade); }
.btn.adv { align-self: flex-end; width: 125px; margin-top: 16px; }
.btn.default { border-color: #000; box-shadow: inset 1px 1px 0 #fff, inset -1px -1px 0 var(--dark), inset -2px -2px 0 var(--shade); }
.actions { display: flex; justify-content: flex-end; gap: 17px; padding: 6px 6px 0; }

/* Task bar */
.taskbar { flex: none; display: flex; align-items: center; height: 27px; padding: 1px 2px; border-top: 1px solid #fff; }
.taskbar button { display: flex; align-items: center; }
.start { width: 55px; height: 22px; padding-left: 2px; gap: 1px; }
.taskbar .start { font: bold 11px/13px var(--bold); }
.start, .apps button { background: var(--face); border: 1px solid; border-color: #fff var(--dark) var(--dark) #fff; box-shadow: inset -1px -1px 0 var(--shade); }
.sep { flex: none; width: 3px; height: 18px; margin: 0 6px; border-left: 1px solid #fff; border-right: 1px solid var(--shade); background: #fff; }
.quick { display: flex; align-items: center; gap: 7px; margin-left: 2px; }
.taskbar > .chev { margin-left: 17px; }
.apps { flex: 1; min-width: 0; display: flex; gap: 3px; margin-left: -1px; }
.apps button { flex: 0 1 160px; height: 22px; padding-left: 4px; gap: 3px; white-space: nowrap; overflow: hidden; }
.apps button.on { font: bold 11px/13px var(--bold); border-color: var(--dark) #fff #fff var(--dark); box-shadow: inset 1px 1px 0 var(--shade); background: repeating-conic-gradient(#fff 0 25%, var(--face) 0 50%) 0 0 / 2px 2px; }
.lang { font-size: 12px; margin: 0 -1px 0 4px; }
.lang + .sep { margin-right: 1px; }
.tray { display: flex; align-items: center; gap: 2px; width: 126px; height: 22px; padding-left: 3px; border: 1px solid; border-color: var(--shade) #fff #fff var(--shade); }
.tray .lan { margin-left: 10px; }
.tray time { margin-left: 5px; }
```
